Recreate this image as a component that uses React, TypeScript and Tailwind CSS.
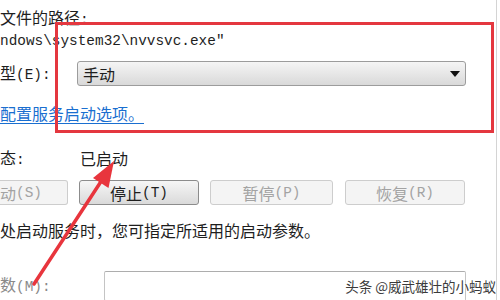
// Windows 服务属性对话框（截图局部）— 启动类型 / 服务状态

const CJK = "font-['Noto_Sans_CJK_SC','Noto_Sans',sans-serif]";
const MONO = "font-['Liberation_Mono','Noto_Sans_CJK_SC',monospace] text-[14.4px]";

function Ascii({ children }: { children: React.ReactNode }) {
  return <span className={MONO}>{children}</span>;
}

function Btn({
  children,
  disabled,
  className = '',
}: {
  children: React.ReactNode;
  disabled?: boolean;
  className?: string;
}) {
  return (
    <div
      className={
        'flex h-[25px] items-center justify-center rounded-[3px] border ' +
        (disabled
          ? 'border-[#cdcdcd] bg-[#f4f4f4] text-[#a3a3a3] '
          : 'border-[#8c8c8c] bg-gradient-to-b from-[#f6f6f6] to-[#dadada] text-[#1e1e1e] ') +
        className
      }
    >
      {children}
    </div>
  );
}

export default function App() {
  return (
    <div className={`relative h-[300px] w-[500px] overflow-hidden bg-white text-[16px] leading-[18px] text-[#1e1e1e] ${CJK}`}>
      <div className="flex h-full w-[497px] flex-col border-r border-[#d4d4d4] pt-[8px]">
        {/* 可执行文件的路径 */}
        <div className="h-[18px] whitespace-nowrap">文件的路径<Ascii>:</Ascii></div>
        <div className="mt-[3px] h-[18px] whitespace-nowrap">
          <span className={MONO}>ndows\system32\nvvsvc.exe"</span>
        </div>

        {/* 启动类型 */}
        <div className="mt-[14px] flex h-[25px] items-center">
          <div className="w-[77px] whitespace-nowrap">
            型<Ascii>(E):</Ascii>
          </div>
          <div className="flex h-[25px] w-[389px] items-center justify-between rounded-[3px] border border-[#9c9c9c] bg-gradient-to-b from-[#f5f5f5] to-[#d9d9d9] pl-[5px] pr-[4px]">
            <span>手动</span>
            <svg width="10" height="6" viewBox="0 0 10 6" className="mr-[1px]">
              <path d="M0 0 L10 0 L5 6 Z" fill="#111" />
            </svg>
          </div>
        </div>

        <div className="mt-[18px] h-[18px] whitespace-nowrap">
          <span className="text-[#1a6fd0] underline decoration-[#1a6fd0] underline-offset-[3px]">配置服务启动选项。</span>
        </div>

        <div className="mt-[13px] h-px w-[460px] bg-[#e4e4e4]" />

        {/* 服务状态 */}
        <div className="mt-[14px] flex h-[18px] items-center">
          <div className="w-[80px]">态<Ascii>:</Ascii></div>
          <div>已启动</div>
        </div>

        <div className="mt-[13px] flex gap-[11px]">
          <Btn disabled className="w-[68px] !justify-start rounded-l-none border-l-0 pl-0">
            动<Ascii>(S)</Ascii>
          </Btn>
          <Btn className="w-[120px]">
            停止<Ascii>(T)</Ascii>
          </Btn>
          <Btn disabled className="w-[123px]">
            暂停<Ascii>(P)</Ascii>
          </Btn>
          <Btn disabled className="ml-[1px] w-[120px]">
            恢复<Ascii>(R)</Ascii>
          </Btn>
        </div>

        <div className="mt-[16px] h-[18px] whitespace-nowrap">
          处启动服务时，您可指定所适用的启动参数。
        </div>

        {/* 启动参数 */}
        <div className="mt-[32px] flex h-[30px]">
          <div className="w-[104px] pt-[4px] text-[#8a8a8a]">
            数<Ascii>(M):</Ascii>
          </div>
          <div className="h-[30px] w-[362px] rounded-[2px] border border-[#c4c4c4] border-t-[#adadad] bg-white" />
        </div>
      </div>

      {/* 红框标注 */}
      <div className="absolute left-[55px] top-[22px] h-[111px] w-[439px] border-[3px] border-[#e4373f]" />

      {/* 红色箭头 */}
      <svg className="absolute left-0 top-0" width="500" height="300" viewBox="0 0 500 300">
        <path d="M34 284 L102 180" stroke="#e8353d" strokeWidth="3.5" strokeLinecap="round" />
        <polygon points="114,161 108.5,188 93,178" fill="#e8353d" />
      </svg>

      {/* 水印 */}
      <div className="absolute right-[4px] top-[277px] whitespace-nowrap text-[13.5px] leading-[18px] text-[#3a3a3a] [text-shadow:0_0_2px_#fff,0_0_2px_#fff]">
        头条 @威武雄壮的小蚂蚁
      </div>
    </div>
  );
}
